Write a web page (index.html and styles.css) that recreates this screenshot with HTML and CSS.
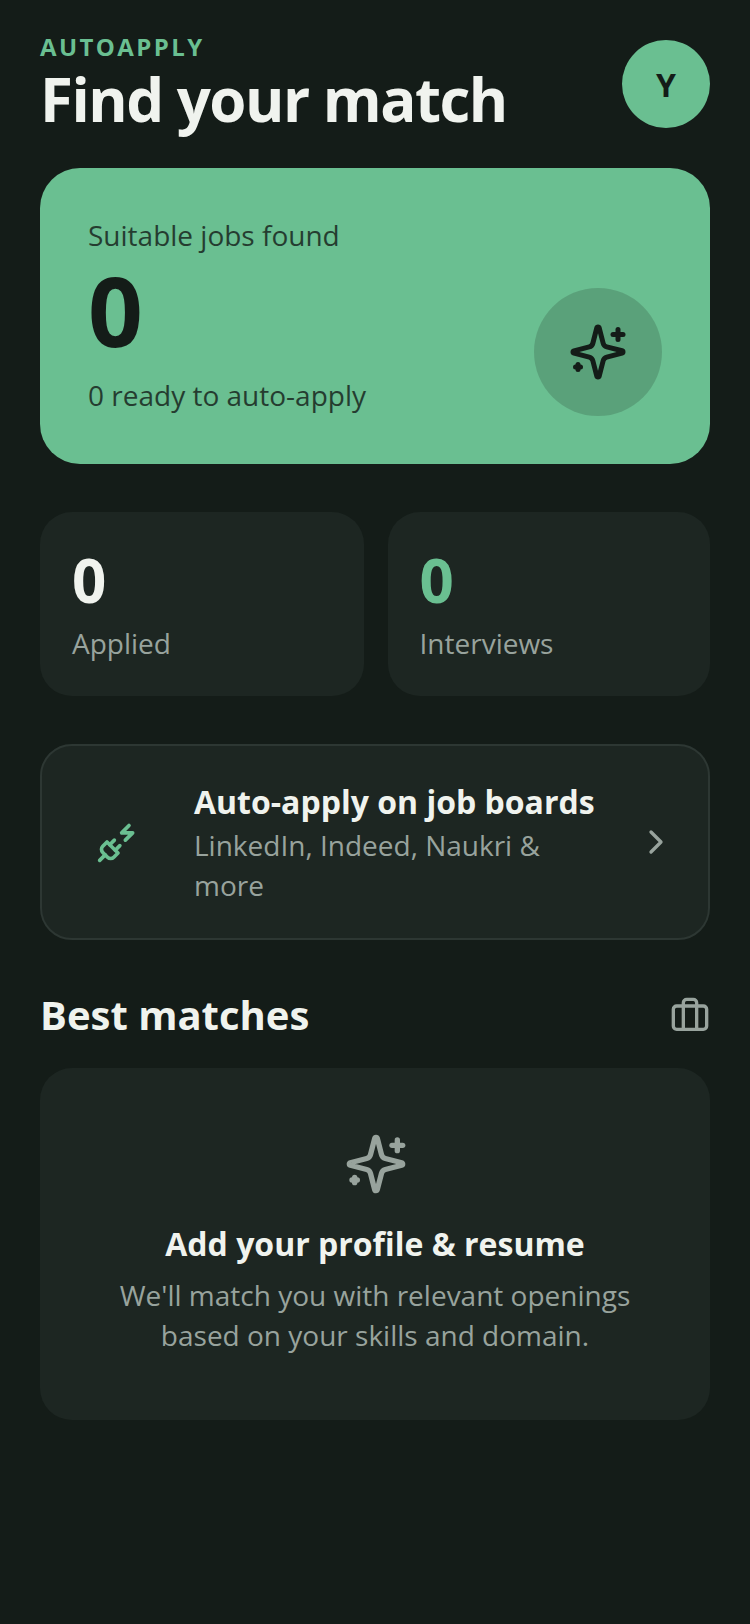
FILE: index.html
```html
<!DOCTYPE html>
<html lang="en">
  <head>
    <meta charset="utf-8">
    <title>AutoApply</title>
    <link rel="stylesheet" href="styles.css">
  </head>
  <body>
    <header class="top">
      <div>
        <div class="brand">AUTOAPPLY</div>
        <h1>Find your match</h1>
      </div>
      <div class="avatar">Y</div>
    </header>

    <section class="hero">
      <div class="hero-text">
        <div class="hero-label">Suitable jobs found</div>
        <div class="hero-count">0</div>
        <div class="hero-label">0 ready to auto-apply</div>
      </div>
      <div class="hero-icon">
        <svg width="60" height="60" viewBox="0 0 24 24" fill="none" stroke="#141c18" stroke-width="2" stroke-linecap="round" stroke-linejoin="round">
          <path d="M9.937 15.500A2 2 0 0 0 8.500 14.063l-6.135-1.582a.5.5 0 0 1 0-.962L8.500 9.936A2 2 0 0 0 9.937 8.500l1.582-6.135a.5.5 0 0 1 .963 0L14.063 8.500A2 2 0 0 0 15.500 9.937l6.135 1.581a.5.5 0 0 1 0 .964L15.500 14.063a2 2 0 0 0-1.437 1.437l-1.582 6.135a.5.5 0 0 1-.963 0z"/>
          <path d="M20 3v4"/>
          <path d="M22 5h-4"/>
          <path d="M4 17v2"/>
          <path d="M5 18H3"/>
        </svg>
      </div>
    </section>

    <section class="stats">
      <div class="stat">
        <div class="stat-num">0</div>
        <div class="stat-label">Applied</div>
      </div>
      <div class="stat">
        <div class="stat-num green">0</div>
        <div class="stat-label">Interviews</div>
      </div>
    </section>

    <section class="boards">
      <div class="boards-icon">
        <svg width="44" height="44" viewBox="0 0 24 24" fill="none" stroke="#6abf91" stroke-width="2" stroke-linecap="round" stroke-linejoin="round">
          <path d="M6.300 20.300a2.400 2.400 0 0 0 3.400 0L12 18l-6-6-2.300 2.300a2.400 2.400 0 0 0 0 3.400Z"/>
          <path d="m2 22 3-3"/>
          <path d="M7.500 13.500 10 11"/>
          <path d="M10.500 16.500 13 14"/>
          <path d="m18 3-4 4h6l-4 4"/>
        </svg>
      </div>
      <div class="boards-text">
        <div class="boards-title">Auto-apply on job boards</div>
        <div class="boards-sub">LinkedIn, Indeed, Naukri &amp; more</div>
      </div>
      <svg class="chevron" width="40" height="40" viewBox="0 0 24 24" fill="none" stroke="#98a39d" stroke-width="2" stroke-linecap="round" stroke-linejoin="round">
        <path d="m9 18 6-6-6-6"/>
      </svg>
    </section>

    <div class="section-head">
      <h2>Best matches</h2>
      <svg width="40" height="40" viewBox="0 0 24 24" fill="none" stroke="#98a39d" stroke-width="2" stroke-linecap="round" stroke-linejoin="round">
        <path d="M16 20V4a2 2 0 0 0-2-2h-4a2 2 0 0 0-2 2v16"/>
        <rect x="2" y="6" width="20" height="14" rx="2"/>
      </svg>
    </div>

    <section class="empty">
      <svg width="64" height="64" viewBox="0 0 24 24" fill="none" stroke="#98a39d" stroke-width="2" stroke-linecap="round" stroke-linejoin="round">
        <path d="M9.937 15.500A2 2 0 0 0 8.500 14.063l-6.135-1.582a.5.5 0 0 1 0-.962L8.500 9.936A2 2 0 0 0 9.937 8.500l1.582-6.135a.5.5 0 0 1 .963 0L14.063 8.500A2 2 0 0 0 15.500 9.937l6.135 1.581a.5.5 0 0 1 0 .964L15.500 14.063a2 2 0 0 0-1.437 1.437l-1.582 6.135a.5.5 0 0 1-.963 0z"/>
        <path d="M20 3v4"/>
        <path d="M22 5h-4"/>
        <path d="M4 17v2"/>
        <path d="M5 18H3"/>
      </svg>
      <div class="empty-title">Add your profile &amp; resume</div>
      <div class="empty-sub">We'll match you with relevant openings based on your skills and domain.</div>
    </section>
  </body>
</html>
```
FILE: styles.css
```css
* {
  box-sizing: border-box;
}
html, body {
  margin: 0;
  height: 100%;
}
body {
  background-color: #141c18;
  font-family: "Open Sans", sans-serif;
  color: #f0f3ee;
  padding: 32px 40px 0;
}
.top {
  display: flex;
  justify-content: space-between;
  align-items: flex-start;
  margin-bottom: 32px;
}
.brand {
  font-size: 24px;
  line-height: 30px;
  font-weight: 700;
  letter-spacing: 2.400px;
  color: #6abf91;
}
h1 {
  margin: 0;
  font-size: 60px;
  line-height: 74px;
  font-weight: 700;
  letter-spacing: -1.500px;
}
.avatar {
  width: 88px;
  height: 88px;
  margin-top: 8px;
  border-radius: 50%;
  background-color: #6abf91;
  color: #141c18;
  font-size: 32px;
  font-weight: 700;
  display: flex;
  align-items: center;
  justify-content: center;
}
.hero {
  background-color: #6abf91;
  border-radius: 40px;
  padding: 48px;
  display: flex;
  justify-content: space-between;
  align-items: flex-end;
  color: #141c18;
  margin-bottom: 48px;
}
.hero-text {
  padding-bottom: 2px;
}
.hero-label {
  font-size: 28px;
  line-height: 38px;
  opacity: 0.8;
}
.hero-count {
  font-size: 96px;
  line-height: 108px;
  font-weight: 700;
  margin: 2px 0 12px;
}
.hero-icon {
  width: 128px;
  height: 128px;
  border-radius: 50%;
  background-color: rgba(20, 28, 24, 0.18);
  display: flex;
  align-items: center;
  justify-content: center;
}
.stats {
  display: grid;
  grid-template-columns: 323.500px 1fr;
  gap: 24px;
  margin-bottom: 48px;
}
.stat {
  background-color: #1d2622;
  border-radius: 32px;
  padding: 32px 32px 33px;
}
.stat-num {
  font-size: 60px;
  line-height: 72px;
  font-weight: 700;
  margin-bottom: 7px;
}
.green {
  color: #6abf91;
}
.stat-label {
  font-size: 28px;
  line-height: 40px;
  color: #98a39d;
}
.boards {
  background-color: #1d2622;
  border: 2px solid #2d3733;
  border-radius: 32px;
  min-height: 196px;
  padding: 0 32px;
  display: flex;
  align-items: center;
  gap: 32px;
  margin-bottom: 48px;
}
.boards-icon {
  width: 88px;
  flex: none;
  display: flex;
  justify-content: center;
}
.boards-text {
  flex: 1;
}
.boards-title {
  font-size: 32px;
  line-height: 44px;
  font-weight: 700;
  margin-bottom: 1px;
}
.boards-sub {
  font-size: 28px;
  line-height: 40px;
  color: #98a39d;
}
.chevron {
  flex: none;
}
.section-head {
  display: flex;
  justify-content: space-between;
  align-items: center;
  height: 56px;
  margin-bottom: 24px;
}
h2 {
  margin: 0;
  padding-bottom: 4px;
  font-size: 40px;
  font-weight: 700;
}
.empty {
  background-color: #1d2622;
  border-radius: 32px;
  padding: 64px 64px 65px;
  text-align: center;
}
.empty svg {
  display: block;
  margin: 0 auto 28px;
  transform: translateX(1px);
}
.empty-title {
  font-size: 32px;
  line-height: 40px;
  font-weight: 700;
  margin-bottom: 11px;
}
.empty-sub {
  font-size: 28px;
  line-height: 40px;
  color: #98a39d;
}
```
